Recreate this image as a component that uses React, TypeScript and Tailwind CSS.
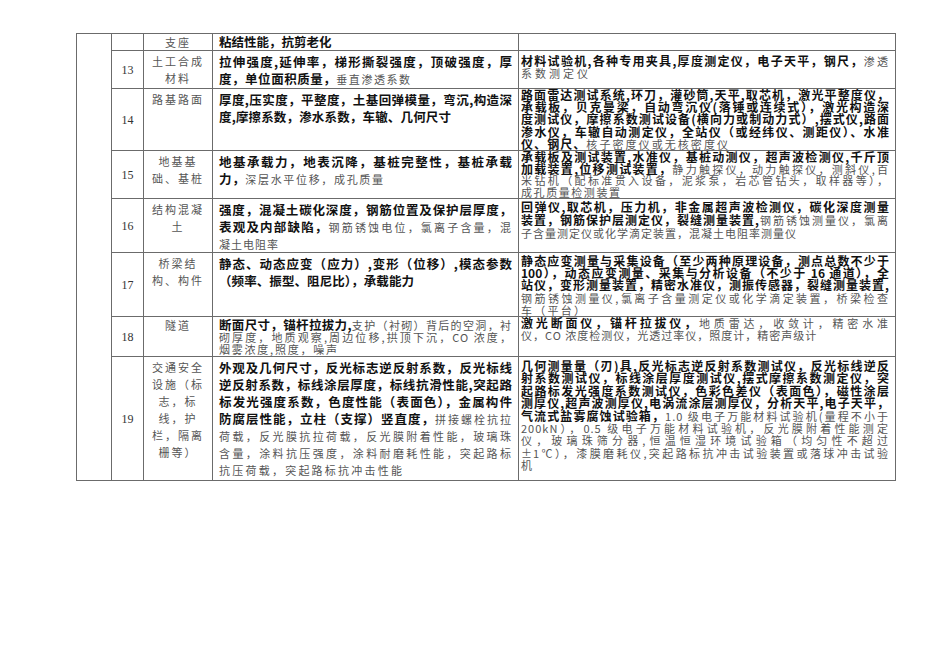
import React from 'react';

type Seg = [kind: 'b' | 'n', text: string];
type Line = { s: Seg[]; w?: number; last?: boolean };

interface Row {
  no?: string;
  cat: string[];
  param: Line[];
  equip: Line[];
  h: number;
  tight?: boolean;
  padParam?: string;
  padEquip?: string;
  eqLine?: string;
}

const rows: Row[] = [
  {
    cat: ['支座'],
    param: [{ s: [['b', '粘结性能，抗剪老化']], last: true }],
    equip: [],
    h: 17,
    padParam: 'pt-0',
  },
  {
    no: '13',
    cat: ['土工合成', '材料'],
    param: [
      { s: [['b', '拉伸强度,延伸率，梯形撕裂强度，顶破强度，厚']] },
      { s: [['b', '度，单位面积质量，'], ['n', '垂直渗透系数']], w: 192 },
    ],
    equip: [
      { s: [['b', '材料试验机,各种专用夹具,厚度测定仪，电子天平，钢尺，'], ['n', '渗透']] },
      { s: [['n', '系数测定仪']], w: 68 },
    ],
    h: 38,
    padEquip: 'pt-[4px]',
    eqLine: 'h-[11.6px] leading-[11.6px]',
  },
  {
    no: '14',
    cat: ['路基路面'],
    param: [
      { s: [['b', '厚度,压实度，平整度，土基回弹模量，弯沉,构造深']] },
      { s: [['b', '度,摩擦系数，渗水系数，车辙、几何尺寸']], w: 232 },
    ],
    equip: [
      { s: [['b', '路面雷达测试系统,环刀，灌砂筒,天平,取芯机，激光平整度仪，']] },
      { s: [['b', '承载板，贝克曼梁，自动弯沉仪(落锤或连续式），激光构造深']] },
      { s: [['b', '度测试仪，摩擦系数测试设备(横向力或制动力式）,摆式仪,路面']] },
      { s: [['b', '渗水仪，车辙自动测定仪，全站仪（或经纬仪、测距仪）、水准']] },
      { s: [['b', '仪、钢尺、'], ['n', '核子密度仪或无核密度仪']], w: 208 },
    ],
    h: 62,
    padEquip: 'pt-0',
  },
  {
    no: '15',
    cat: ['地基基', '础、基桩'],
    param: [
      { s: [['b', '地基承载力，地表沉降，基桩完整性，基桩承载']] },
      { s: [['b', '力，'], ['n', '深层水平位移，成孔质量']], w: 165 },
    ],
    equip: [
      { s: [['b', '承载板及测试装置,水准仪，基桩动测仪，超声波检测仪,千斤顶']] },
      { s: [['b', '加载装置,位移测试装置，'], ['n', '静力触探仪，动力触探仪，测斜仪,百']] },
      { s: [['n', '米钻机（配标准贯入设备，泥浆泵，岩芯管钻头，取样器等），']] },
      { s: [['n', '成孔质量检测装置']], w: 100 },
    ],
    h: 48,
    padEquip: 'pt-0',
    eqLine: 'h-[11.7px] leading-[11.7px]',
  },
  {
    no: '16',
    cat: ['结构混凝', '土'],
    param: [
      { s: [['b', '强度，混凝土碳化深度，钢筋位置及保护层厚度，']] },
      { s: [['b', '表观及内部缺陷，'], ['n', '钢筋锈蚀电位，氯离子含量，混']] },
      { s: [['n', '凝土电阻率']], w: 59 },
    ],
    equip: [
      { s: [['b', '回弹仪,取芯机，压力机，非金属超声波检测仪，碳化深度测量']] },
      { s: [['b', '装置，钢筋保护层测定仪，裂缝测量装置,'], ['n', '钢筋锈蚀测量仪，氯离']] },
      { s: [['n', '子含量测定仪或化学滴定装置，混凝土电阻率测量仪']], w: 235 },
    ],
    h: 54,
    eqLine: 'h-[12.8px] leading-[12.8px]',
  },
  {
    no: '17',
    cat: ['桥梁结', '构、构件'],
    param: [
      { s: [['b', '静态、动态应变（应力）,变形（位移）,模态参数']] },
      { s: [['b', '（频率、振型、阻尼比），承载能力']], w: 195 },
    ],
    equip: [
      { s: [['b', '静态应变测量与采集设备（至少两种原理设备，测点总数不少于']] },
      { s: [['b', '100），动态应变测量、采集与分析设备（不少于 16 通道），全']] },
      { s: [['b', '站仪，变形测量装置，精密水准仪，测振传感器，裂缝测量装置,']] },
      { s: [['n', '钢筋锈蚀测量仪,氯离子含量测定仪或化学滴定装置，桥梁检查']] },
      { s: [['n', '车（平台）']], w: 65 },
    ],
    h: 64,
  },
  {
    no: '18',
    cat: ['隧道'],
    param: [
      { s: [['b', '断面尺寸，锚杆拉拔力,'], ['n', '支护（衬砌）背后的空洞，衬']] },
      { s: [['n', '砌厚度，地质观察,周边位移,拱顶下沉，CO 浓度，']] },
      { s: [['n', '烟雾浓度,照度，噪声']], w: 119 },
    ],
    equip: [
      { s: [['b', '激光断面仪，锚杆拉拔仪，'], ['n', '地质雷达，收敛计，精密水准']] },
      { s: [['n', '仪，CO 浓度检测仪，光透过率仪，照度计，精密声级计']], w: 275 },
    ],
    h: 40,
    tight: true,
    padEquip: 'pt-0',
  },
  {
    no: '19',
    cat: ['交通安全', '设施（标', '志，标', '线，护', '栏，隔离', '栅等）'],
    param: [
      { s: [['b', '外观及几何尺寸，反光标志逆反射系数，反光标线']] },
      { s: [['b', '逆反射系数，标线涂层厚度，标线抗滑性能,突起路']] },
      { s: [['b', '标发光强度系数，色度性能（表面色），金属构件']] },
      { s: [['b', '防腐层性能，立柱（支撑）竖直度，'], ['n', '拼接螺栓抗拉']] },
      { s: [['n', '荷载，反光膜抗拉荷载，反光膜附着性能，玻璃珠']] },
      { s: [['n', '含量，涂料抗压强度，涂料耐磨耗性能，突起路标']] },
      { s: [['n', '抗压荷载，突起路标抗冲击性能']], w: 184 },
    ],
    equip: [
      { s: [['b', '几何测量量（刃)具,反光标志逆反射系数测试仪，反光标线逆反']] },
      { s: [['b', '射系数测试仪，标线涂层厚度测试仪,摆式摩擦系数测定仪，突']] },
      { s: [['b', '起路标发光强度系数测试仪，色彩色差仪（表面色），磁性涂层']] },
      { s: [['b', '测厚仪,超声波测厚仪,电涡流涂层测厚仪，分析天平,电子天平，']] },
      { s: [['b', '气流式盐雾腐蚀试验箱，'], ['n', '1.0 级电子万能材料试验机(量程不小于']] },
      { s: [['n', '200kN），0.5 级电子万能材料试验机，反光膜附着性能测定']] },
      { s: [['n', '仪，玻璃珠筛分器,恒温恒湿环境试验箱（均匀性不超过']] },
      { s: [['n', '±1℃），漆膜磨耗仪,突起路标抗冲击试验装置或落球冲击试验']] },
      { s: [['n', '机']], last: true },
    ],
    h: 124,
    padEquip: 'pt-[3px]',
    eqLine: 'h-[12.4px] leading-[12.4px]',
  },
];

// one printed line; fixed height so mixed font sizes don't push the rows apart
const Text: React.FC<{ line: Line; size: string }> = ({ line, size }) => {
  const spread = !line.last;
  return (
    <div
      className={`${size} whitespace-nowrap ${spread ? 'text-justify [text-align-last:justify]' : 'text-left'}`}
      style={line.w ? { width: line.w } : undefined}
    >
      {line.s.map(([k, t], i) =>
        k === 'b' ? (
          <span key={i} className="font-bold text-[#111]">
            {t}
          </span>
        ) : (
          <span key={i} className="text-[11px] tracking-[1px] font-normal text-[#555]">
            {t}
          </span>
        )
      )}
    </div>
  );
};

const cell = 'border border-[#6b6b6b] p-0 align-top';

export default function App() {
  return (
    <div className="w-[950px] h-[672px] overflow-hidden bg-white pt-[33px] font-['Noto_Sans_CJK_SC','Noto_Sans',sans-serif]">
      <table className="ml-[76px] border-collapse table-fixed w-[819px]">
        <colgroup>
          <col className="w-[35px]" />
          <col className="w-[32px]" />
          <col className="w-[69px]" />
          <col className="w-[306px]" />
          <col className="w-[377px]" />
        </colgroup>
        <tbody>
          {rows.map((r, i) => {
            const paramLine =
              i === 0
                ? 'text-[12.5px] h-[16px] leading-[16px]'
                : r.tight
                  ? 'text-[12.5px] h-[12px] leading-[12px]'
                  : 'text-[12.5px] h-[17px] leading-[17px]';
            const catLine =
              i === 0 ? 'h-[16px] leading-[16px]' : r.tight ? 'h-[12px] leading-[12px]' : 'h-[17px] leading-[17px]';
            return (
              <tr key={i} style={{ height: r.h }}>
                {i === 0 && <td rowSpan={rows.length} className={cell} />}
                <td className="border border-[#6b6b6b] p-0 align-middle text-center font-['Liberation_Serif',serif] text-[12px] leading-[12px] text-[#333]">
                  {r.no}
                </td>
                <td
                  className={`${cell} ${i === 0 ? 'pt-0' : 'pt-[2px]'} text-center text-[11px] tracking-[2px] text-[#555]`}
                >
                  {r.cat.map((c, j) => (
                    <div key={j} className={catLine}>
                      {c}
                    </div>
                  ))}
                </td>
                <td className={`${cell} ${r.padParam ?? 'pt-[2px]'} px-[6px]`}>
                  {r.param.map((l, j) => (
                    <Text key={j} line={l} size={paramLine} />
                  ))}
                </td>
                <td className={`${cell} ${r.padEquip ?? 'pt-[2px]'} pl-[2px] pr-[6px]`}>
                  {r.equip.map((l, j) => (
                    <Text key={j} line={l} size={`text-[12px] ${r.eqLine ?? 'h-[12.2px] leading-[12.2px]'}`} />
                  ))}
                </td>
              </tr>
            );
          })}
        </tbody>
      </table>
    </div>
  );
}
